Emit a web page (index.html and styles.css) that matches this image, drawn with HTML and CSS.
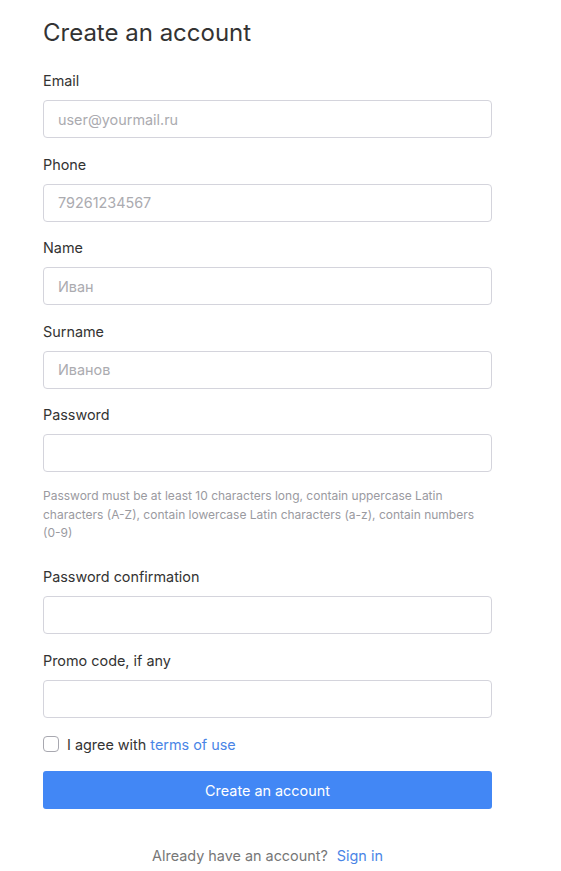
FILE: index.html
```html
<!DOCTYPE html>
<html>
<head>
<meta charset="utf-8">
<link rel="stylesheet" href="styles.css">
</head>
<body>
<div class="page">
  <h1 class="title">Create an account</h1>
  <form class="form">
    <div class="field">
      <label class="label">Email</label>
      <input class="input" type="text" placeholder="user@yourmail.ru">
    </div>
    <div class="field">
      <label class="label">Phone</label>
      <input class="input" type="text" placeholder="79261234567">
    </div>
    <div class="field">
      <label class="label">Name</label>
      <input class="input" type="text" placeholder="Иван">
    </div>
    <div class="field">
      <label class="label">Surname</label>
      <input class="input" type="text" placeholder="Иванов">
    </div>
    <div class="field">
      <label class="label">Password</label>
      <input class="input" type="password">
      <p class="help">Password must be at least 10 characters long, contain uppercase Latin characters (A-Z), contain lowercase Latin characters (a-z), contain numbers (0-9)</p>
    </div>
    <div class="field">
      <label class="label">Password confirmation</label>
      <input class="input" type="password">
    </div>
    <div class="field">
      <label class="label">Promo code, if any</label>
      <input class="input" type="text">
    </div>
    <label class="agree">
      <span class="box"></span>
      <span>I agree with <a class="link" href="#">terms of use</a></span>
    </label>
    <button class="button" type="button">Create an account</button>
    <p class="signin">Already have an account? <a class="link" href="#">Sign in</a></p>
  </form>
</div>
</body>
</html>
```
FILE: styles.css
```css
* { box-sizing: border-box; }
html, body { margin: 0; padding: 0; background: #fff; }
body {
  font-family: Inter, "Noto Sans", sans-serif;
  color: #333;
}
.page {
  width: 449px;
  margin-left: 43px;
  padding-top: 18px;
}
.title {
  margin: 0;
  font-size: 24px;
  line-height: 29px;
  font-weight: 400;
  color: #333;
}
.form {
  display: flex;
  flex-direction: column;
  margin-top: 24px;
}
.field {
  display: flex;
  flex-direction: column;
  margin-bottom: 16.5px;
}
.label {
  font-size: 14.4px;
  line-height: 20px;
  margin-bottom: 9px;
  color: #333;
}
.input {
  height: 38px;
  width: 100%;
  border: 1px solid #d4d4dc;
  border-radius: 4px;
  padding: 0 14px;
  font-family: Inter, "Noto Sans", sans-serif;
  font-size: 14.4px;
  color: #333;
  outline: none;
}
.input::placeholder { color: #ababb0; }
.help {
  margin: 15px 0 8px;
  font-size: 12px;
  line-height: 18.5px;
  color: #9a9a9f;
}
.agree {
  display: flex;
  align-items: center;
  gap: 8px;
  height: 20px;
  margin-top: 0;
  font-size: 14.4px;
  color: #333;
}
.box {
  width: 16px;
  height: 16px;
  border: 1px solid #a8a8b0;
  border-radius: 4px;
  background: #fff;
}
.link { color: #4a85e6; text-decoration: none; }
.button {
  margin-top: 17px;
  height: 38px;
  width: 100%;
  border: none;
  border-radius: 3px;
  background: #4287f5;
  color: #fff;
  font-family: Inter, "Noto Sans", sans-serif;
  font-size: 14.4px;
}
.signin {
  margin: 37px 0 0;
  text-align: center;
  font-size: 14.4px;
  line-height: 20px;
  color: #777;
}
.signin .link { margin-left: 5px; }
```
